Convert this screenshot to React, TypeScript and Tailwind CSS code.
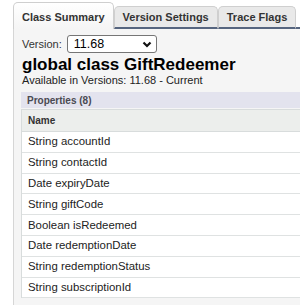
import React from 'react';

const properties = [
  'String accountId',
  'String contactId',
  'Date expiryDate',
  'String giftCode',
  'Boolean isRedeemed',
  'Date redemptionDate',
  'String redemptionStatus',
  'String subscriptionId',
];

function Tab({ label, active }: { label: string; active?: boolean }) {
  if (active) {
    return (
      <div className="h-[27px] px-[8px] pt-[2px] flex items-center rounded-t-[5px] border border-b-0 border-[#cfcfcf] bg-gradient-to-b from-white to-[#f5f5f5] text-[11px] font-bold text-[#333]">
        {label}
      </div>
    );
  }
  return (
    <div className="h-[23px] px-[8px] flex items-center rounded-t-[5px] border border-b-2 border-[#cfcfcf] border-b-[#56657f] bg-[#e9e9e9] text-[11px] font-bold text-[#333]">
      {label}
    </div>
  );
}

export default function App() {
  return (
    <div className="w-[300px] h-[305px] overflow-hidden bg-white pl-[13px] pt-[2px] font-['Liberation_Sans',Arial,sans-serif] text-[#222]">
      <div className="flex items-end">
        <Tab label="Class Summary" active />
        <Tab label="Version Settings" />
        <Tab label="Trace Flags" />
        <div className="flex-1 h-[2px] bg-[#56657f]" />
      </div>

      <div className="h-[280px] border-l border-[#d6d6d6] bg-[#f5f5f5] pl-[8px] pt-[6px]">
        <div className="flex items-center gap-[5px] text-[11px] text-[#333]">
          <span>Version:</span>
          <div className="w-[90px] h-[18px] flex items-center justify-between pl-[6px] pr-[4px] rounded-[3px] border border-[#767676] bg-white text-[12.5px] text-black">
            <span>11.68</span>
            <svg width="10" height="7" viewBox="0 0 10 7">
              <path d="M1.5 1.5 L5 5 L8.5 1.5" fill="none" stroke="#111" strokeWidth="2.2" />
            </svg>
          </div>
        </div>

        <h1 className="mt-[2px] text-[17px] leading-[19px] font-bold text-black">global class GiftRedeemer</h1>
        <p className="text-[11px] leading-[12px] text-[#222]">Available in Versions: 11.68 - Current</p>

        <div className="mt-[6px] -ml-[1px] w-[320px]">
          <div className="h-[16px] pl-[6px] flex items-center bg-[#e3e3ee] text-[10px] font-bold text-[#4a4a52]">
            Properties (8)
          </div>
          <div className="mt-[1px] border-l border-t border-[#d8dcdc] bg-white">
            <div className="h-[22px] pl-[6px] flex items-center border-b border-[#d8dcdc] bg-[#eceeec] text-[10px] font-bold text-[#333]">
              Name
            </div>
            {properties.map((p) => (
              <div
                key={p}
                className="h-[20.8px] pl-[6px] flex items-center border-b border-[#dfe2e2] text-[11.4px] text-[#222]"
              >
                {p}
              </div>
            ))}
          </div>
        </div>
      </div>
    </div>
  );
}
